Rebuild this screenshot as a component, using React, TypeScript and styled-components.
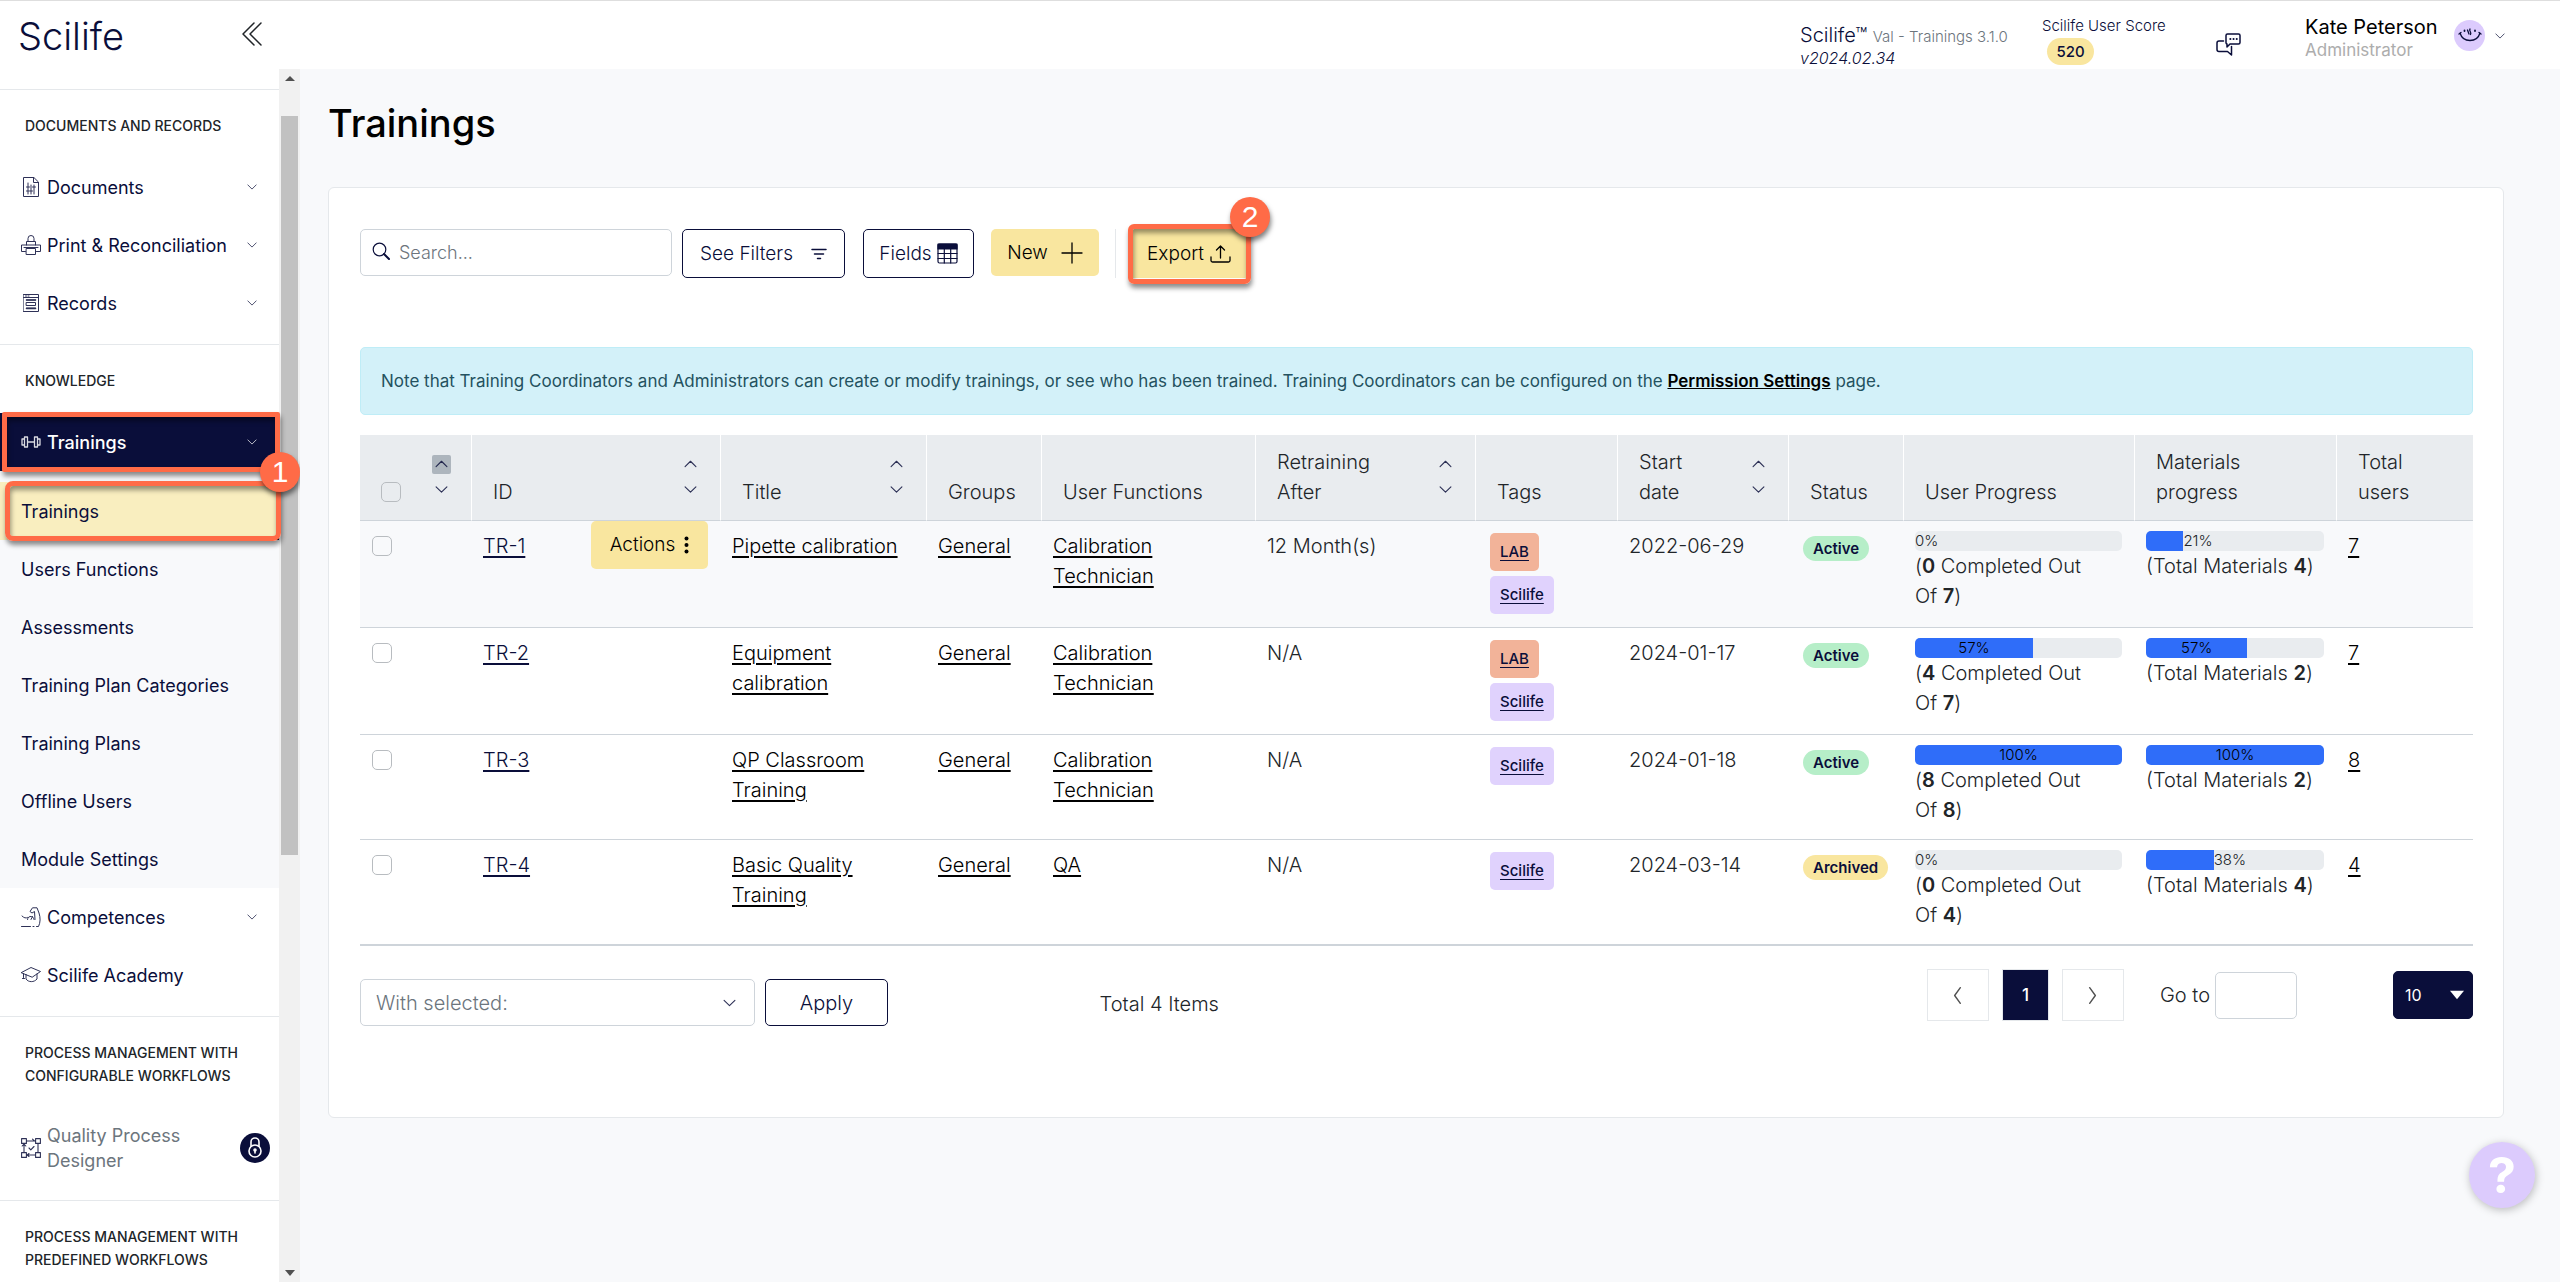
import React from "react";
import styled, { createGlobalStyle, css } from "styled-components";

const color = {
  navy: "#0a0e3a",
  ink: "#212529",
  page: "#f8f9fb",
  line: "#e5e8eb",
  rule: "#ced4da",
  yellow: "#f9e69f",
  orange: "#ff6b47",
  blue: "#2f6df9",
  track: "#e9ecef",
  lilac: "#dccbfd",
};

const Global = createGlobalStyle`
  *, *::before, *::after { box-sizing: border-box; }
  body {
    margin: 0;
    background: ${color.page};
    color: ${color.ink};
    font-family: Inter, "Liberation Sans", sans-serif;
    font-size: 20px;
    font-weight: 300;
    line-height: 30px;
  }
  button, input, select { font: inherit; color: inherit; margin: 0; }
  button { cursor: pointer; }
  svg { display: block; flex: none; }
`;

/* ---------- icons ---------- */

type IconProps = { size?: number };

const Stroke = styled.svg.attrs({ fill: "none", stroke: "currentColor", "aria-hidden": true })`
  stroke-linecap: round;
  stroke-linejoin: round;
`;

function Chevron({ dir, size = 10 }: { dir: "up" | "down" | "left" | "right"; size?: number }) {
  const d = {
    up: "M1 8 6 3 11 8",
    down: "M1 3.5 6 8.5 11 3.5",
    left: "M8 0.5 4 6 8 11.5",
    right: "M4 0.5 8 6 4 11.5",
  }[dir];
  return (
    <Stroke width={size} height={size} viewBox="0 0 12 12" strokeWidth={1} opacity={0.85}>
      <path d={d} />
    </Stroke>
  );
}

const CollapseIcon = () => (
  <Stroke width={20} height={24} viewBox="0 0 20 24" strokeWidth={1.5}>
    <path d="M12 1 1 12l11 11M19 1 8 12l11 11" />
  </Stroke>
);

const DocumentIcon = () => (
  <Stroke width={20} height={20} viewBox="0 0 20 20" strokeWidth={1}>
    <path d="M12.5.5h-10v19h15v-14zM12.5.5v5h5M7 6v11M10 8v9M13 8v9M5.500 10h3M8.500 14h3M11.500 10h3M5.500 14h2" />
  </Stroke>
);

const PrinterIcon = () => (
  <Stroke width={20} height={20} viewBox="0 0 20 20" strokeWidth={1}>
    <path d="M7 6V3.500a3 3 0 0 1 6 0V6M5.500 10V6.500h9V10M4.500 16.500h-4v-6.500h19v6.500h-4M3 12.500h14M5.500 13.500h9v6h-9z" />
  </Stroke>
);

const RecordsIcon = () => (
  <Stroke width={20} height={20} viewBox="0 0 20 20" strokeWidth={1}>
    <path d="M2.500 1.500h15v17h-15zM2.500 4.500h15M4.500 3h1M7 3h1M5.500 7h9M5.500 9.500h9v3h-9zM5.500 15h9" />
    <path d="M5.500 7h9M5.500 15.500h9" strokeWidth={1.6} />
  </Stroke>
);

const DumbbellIcon = () => (
  <Stroke width={20} height={20} viewBox="0 0 20 20" strokeWidth={1.3}>
    <path d="M3.500 5h3v10h-3zM13.500 5h3v10h-3zM3.500 7H1v6h2.500M16.500 7H19v6h-2.500M6.500 10h7" />
  </Stroke>
);

const MuscleIcon = () => (
  <Stroke width={20} height={20} viewBox="0 0 20 20" strokeWidth={1}>
    <path d="M.5 19.500h9M12 19.500h1M15.500 19.500h2c2-4 2-9 .5-13.500L16 .8h-4.500L9 4.500l2 1.500 2.500-1.500.5 8M1 9c2 2 4 2.500 5.500 1.500M6.500 12.500c0-2 2-3.500 4-3 1.500.5 2 1.500 2.500 3M10 12.500l1.500-3" />
  </Stroke>
);

const AcademyIcon = () => (
  <Stroke width={20} height={20} viewBox="0 0 20 20" strokeWidth={1}>
    <path d="m.5 7.500 9.500-5 9.500 4-8 5.500zM5 9.500v4.500c2.500 3.500 8 3.500 11 0V9M2.500 8.500v4M1.500 13.500h2" />
  </Stroke>
);

const ProcessIcon = () => (
  <Stroke width={20} height={20} viewBox="0 0 20 20" strokeWidth={1.1}>
    <path d="M.6.6h4.800v4.800H.6zM14.600.6h4.800v4.800h-4.800zM.6 14.600h4.800v4.800H.6zM14.600 14.600h4.800v4.800h-4.800zM5.400 3h9.200M11.500 1.200 13.500 3M3 5.400v9.200M1.200 8 3 6l1.800 2M5.400 17h9.200M17 5.400v9.200M8 10l1.800 1.800L13 8.500M8 15.500 6.200 17 8 18.500" />
  </Stroke>
);

const LockIcon = () => (
  <Stroke width={16} height={22} viewBox="0 0 16 22" strokeWidth={1.6}>
    <path d="M4 9V5a4 4 0 0 1 8 0v4" />
    <circle cx="8" cy="14" r="6" />
    <path d="M8 13v3" />
    <circle cx="8" cy="13" r="1" />
  </Stroke>
);

const ChatIcon = () => (
  <Stroke width={25} height={23} viewBox="0 0 25 23" strokeWidth={1.5}>
    <path d="M11.500 1h11a1.500 1.500 0 0 1 1.500 1.500v7a1.500 1.500 0 0 1-1.500 1.500h-8.500l-3 3V11a1.500 1.500 0 0 1-1-1.500v-7A1.500 1.500 0 0 1 11.500 1z" />
    <path d="M7.500 8H3a2 2 0 0 0-2 2v6.500a2 2 0 0 0 2 2h8.500l4 3.500v-8.500" />
    <path d="M14.300 6h.1M17.500 6h.1M20.700 6h.1" strokeWidth={2} />
  </Stroke>
);

const AvatarIcon = () => (
  <Stroke width={24} height={16} viewBox="0 0 24 16" strokeWidth={1.3}>
    <path d="M2 5c3 10 17 10 20 0M1 6l2-1.500M21 4.500 23 6M12 1c-1.500 2 2 3 .5 5.500M9.500 2l1.500 4" />
    <path d="M6.500 2.500v.5M17 2.500v.5" strokeWidth={1.8} />
  </Stroke>
);

const SearchIcon = () => (
  <Stroke width={18} height={18} viewBox="0 0 18 18" strokeWidth={1.2}>
    <circle cx="7.500" cy="7.500" r="6.300" />
    <path d="m12 12 5 5" strokeWidth={2} />
  </Stroke>
);

const FilterIcon = () => (
  <Stroke width={16} height={12} viewBox="0 0 16 12" strokeWidth={1.5}>
    <path d="M1 1.500h14M3.500 6h9M6.500 10.500h3" />
  </Stroke>
);

const TableIcon = () => (
  <Stroke width={21} height={21} viewBox="0 0 21 21" strokeWidth={1.2}>
    <path d="M1 1h19v5H1z" fill="currentColor" />
    <rect x="1" y="1" width="19" height="19" rx="1.500" />
    <path d="M1 10.500h19M1 15.500h19M7.300 6v14M13.700 6v14" />
  </Stroke>
);

const PlusIcon = () => (
  <Stroke width={22} height={22} viewBox="0 0 22 22" strokeWidth={1.3}>
    <path d="M11 1v20M1 11h20" />
  </Stroke>
);

const ExportIcon = () => (
  <Stroke width={21} height={18} viewBox="0 0 21 18" strokeWidth={1.3}>
    <path d="M10.500 13V1M6.500 5l4-4 4 4M1 12v3.500A1.500 1.500 0 0 0 2.500 17h16a1.500 1.500 0 0 0 1.500-1.500V12" />
  </Stroke>
);

const DotsIcon = () => (
  <svg width={5} height={18} viewBox="0 0 5 18" fill="currentColor" aria-hidden>
    <circle cx="2.500" cy="2.500" r="2" />
    <circle cx="2.500" cy="9" r="2" />
    <circle cx="2.500" cy="15.500" r="2" />
  </svg>
);

const TriangleIcon = ({ size = 10, up = false }: IconProps & { up?: boolean }) => (
  <svg width={size} height={size} viewBox="0 0 10 10" fill="currentColor" aria-hidden>
    <path d={up ? "M0 8 5 3l5 5z" : "M0 2h10L5 8z"} />
  </svg>
);

/* ---------- frame ---------- */

const Page = styled.div`
  display: flex;
  flex-direction: column;
  height: 100vh;
  min-width: 1600px;
`;

const TopBar = styled.header`
  display: flex;
  justify-content: space-between;
  flex: none;
  height: 69px;
  padding: 0 55px 0 18px;
  border-top: 1px solid #dedede;
  background: #fff;
`;

const Brand = styled.div`
  display: flex;
  align-items: flex-start;
  justify-content: space-between;
  width: 244px;
`;

const Logo = styled.a`
  margin-top: 15px;
  color: ${color.navy};
  font-size: 38px;
  font-weight: 300;
  line-height: 40px;
  text-decoration: none;
`;

const PlainButton = styled.button`
  padding: 0;
  border: 0;
  background: none;
`;

const Collapse = styled(PlainButton)`
  margin-top: 21px;
`;

const TopRight = styled.div`
  display: flex;
  align-items: flex-start;
  color: ${color.navy};
`;

const Version = styled.div`
  width: 242px;
  padding-top: 22px;
  line-height: 24px;
  font-size: 20px;

  small { font-size: 15px; color: #6c757d; }
  em { display: block; font-size: 16px; line-height: 18px; }
`;

const Score = styled.div`
  width: 174px;
  padding-top: 14px;
  font-size: 15px;
  line-height: 22px;
`;

const ScoreBadge = styled.div`
  width: 47px;
  margin: 1px 0 0 5px;
  border-radius: 14px;
  background: ${color.yellow};
  font-size: 15px;
  font-weight: 500;
  line-height: 27px;
  text-align: center;
`;

const ChatButton = styled(PlainButton)`
  margin: 32px 64px 0 0;
`;

const UserName = styled.div`
  width: 149px;
  padding-top: 14px;
  color: #000;
  font-size: 20px;
  font-weight: 400;
  line-height: 24px;

  small { display: block; color: #adadad; font-size: 17px; line-height: 22px; }
`;

const AccountMenu = styled(PlainButton)`
  display: flex;
  align-items: center;
  gap: 10px;
  margin-top: 19px;
`;

const Avatar = styled.span`
  display: grid;
  place-items: center;
  width: 31px;
  height: 31px;
  border-radius: 50%;
  background: ${color.lilac};
`;

const Body = styled.div`
  display: flex;
  flex: 1;
  min-height: 0;
`;

/* ---------- sidebar ---------- */

const Sidebar = styled.aside`
  display: flex;
  flex: none;
  width: 300px;
  overflow: hidden;
`;

const Nav = styled.nav`
  flex: 1;
  padding-top: 20px;
  background: #fff;
`;

const ScrollTrack = styled.div`
  display: flex;
  flex-direction: column;
  align-items: center;
  justify-content: space-between;
  width: 21px;
  padding: 4px 0;
  background: #f1f1f1;
  color: #505050;
`;

const ScrollThumb = styled.div`
  flex: 0 1 739px;
  width: 17px;
  margin: 33px 0 auto;
  background: #c1c1c1;
`;

const Section = styled.section`
  padding-bottom: 12px;
  border-top: 1px solid ${color.line};
`;

const SectionTitle = styled.h2`
  margin: 0;
  padding: 24px 25px 21px;
  font-size: 14px;
  font-weight: 500;
  line-height: 23px;
  text-transform: uppercase;
`;

const NavLink = styled.a<{ $active?: boolean; $muted?: boolean }>`
  position: relative;
  display: flex;
  align-items: center;
  gap: 6px;
  height: 58px;
  padding: 0 22px 0 21px;
  color: ${color.navy};
  font-size: 18px;
  font-weight: 400;
  line-height: 25px;
  text-decoration: none;

  > span { flex: 1; }
  > svg:first-child { opacity: 0.85; }

  ${(p) => p.$active && css`
    background: ${color.navy};
    color: #fff;
    font-weight: 500;
  `}
  ${(p) => p.$muted && css`
    height: 80px;
    padding-right: 9px;
    > span { color: #6c757d; }
  `}
`;

const SubNav = styled.div`
  padding: 11px 0 0;
  background: ${color.page};
`;

const SubLink = styled.a<{ $active?: boolean }>`
  position: relative;
  display: flex;
  align-items: center;
  height: 58px;
  padding: 1px 21px 0;
  color: ${color.navy};
  font-size: 18px;
  font-weight: 400;
  text-decoration: none;
  ${(p) => p.$active && css`
    border-right: 3px solid ${color.navy};
    background: #f9eebf;
  `}
`;

const LockBadge = styled.i`
  display: grid;
  place-items: center;
  width: 30px;
  height: 30px;
  border-radius: 50%;
  background: ${color.navy};
  color: #fff;
`;

/* ---------- callouts drawn over controls ---------- */

const CalloutFrame = styled.i<{ $radius: number; $left?: number; $right?: number }>`
  position: absolute;
  inset: -1px ${(p) => p.$right ?? -1}px -1px ${(p) => p.$left ?? 2}px;
  z-index: 1;
  border: 5px solid ${color.orange};
  border-radius: ${(p) => p.$radius}px;
  box-shadow: 1px 4px 5px rgba(0, 0, 0, 0.45), inset 1px 4px 5px rgba(0, 0, 0, 0.4);
  pointer-events: none;
`;

const CalloutNumber = styled.i<{ $top: number; $right: number }>`
  position: absolute;
  top: ${(p) => p.$top}px;
  right: ${(p) => p.$right}px;
  z-index: 2;
  width: 40px;
  height: 40px;
  border-radius: 50%;
  background: ${color.orange};
  box-shadow: 1px 4px 5px rgba(0, 0, 0, 0.5);
  color: #fff;
  font: 400 30px/40px "Liberation Sans", sans-serif;
  text-align: center;
`;

/* ---------- main ---------- */

const Main = styled.main`
  flex: 1;
  min-width: 0;
  padding: 30px 56px 0 28px;
`;

const Title = styled.h1`
  margin: 0 0 40px;
  color: #000;
  font-size: 38px;
  font-weight: 500;
  line-height: 48px;
`;

const Card = styled.div`
  padding: 41px 30px 91px 31px;
  border: 1px solid ${color.line};
  border-radius: 6px;
  background: #fff;
`;

const Toolbar = styled.div`
  display: flex;
  align-items: flex-start;
  height: 49px;
  margin-bottom: 69px;
`;

const SearchBox = styled.label`
  display: flex;
  align-items: center;
  gap: 9px;
  width: 312px;
  height: 47px;
  margin-right: 10px;
  padding: 0 11px;
  border: 1px solid ${color.rule};
  border-radius: 5px;
  color: ${color.navy};
  font-size: 18px;

  svg { margin-bottom: 4px; }
  input {
    flex: 1;
    min-width: 0;
    padding: 0;
    border: 0;
    outline: 0;
    background: none;
  }
  input::placeholder { color: #6c757d; opacity: 1; }
`;

const Button = styled.button<{ $solid?: boolean; $mr?: number }>`
  display: flex;
  align-items: center;
  justify-content: center;
  gap: ${(p) => (p.$solid ? 13 : 5)}px;
  height: ${(p) => (p.$solid ? 47 : 49)}px;
  margin-right: ${(p) => p.$mr ?? 0}px;
  padding: 0;
  border: ${(p) => (p.$solid ? "0" : `1px solid ${color.navy}`)};
  border-radius: 5px;
  background: ${(p) => (p.$solid ? color.yellow : "#fff")};
  color: ${(p) => (p.$solid ? "#000" : color.navy)};
  font-size: 19px;
  white-space: nowrap;
`;

const FilterButton = styled(Button)`
  gap: 18px;
  width: 163px;
`;

const FieldsButton = styled(Button)`
  width: 111px;
`;

const NewButton = styled(Button)`
  width: 108px;
`;

const ExportSlot = styled.div`
  position: relative;
  padding-left: 12px;
  border-left: 1px solid ${color.line};
`;

const ExportButton = styled(Button)`
  gap: 6px;
  width: 122px;
  height: 49px;
`;

const ExportFrame = styled(CalloutFrame)`
  inset: -5px -1px -6px 12px;
`;

const Note = styled.p`
  margin: 0 0 20px;
  padding: 18px 20px;
  border: 1px solid #bfedf7;
  border-radius: 5px;
  background: #d3f1f9;
  color: #24525f;
  font-size: 17px;
  font-weight: 400;

  a { color: #000; font-weight: 600; }
`;

const Table = styled.table`
  width: 100%;
  border-collapse: separate;
  border-spacing: 0;
  border-bottom: 1px solid ${color.rule};
  table-layout: fixed;
`;

const HeadCell = styled.th`
  padding: 12px 20px 13px 21px;
  border-bottom: 1px solid ${color.rule};
  background: ${color.track};
  font-weight: 300;
  text-align: left;

  & + & { border-left: 1px solid #fff; }
`;

const HeadInner = styled.div`
  display: flex;
  align-items: flex-end;
  justify-content: space-between;
  height: 60px;
`;

const HeadLabel = styled.span<{ $narrow?: boolean }>`
  width: ${(p) => (p.$narrow ? "min-content" : "auto")};
`;

const SelectAll = styled.span`
  display: flex;
  align-items: flex-end;
  align-self: flex-start;
  height: 55px;
`;

const Sorter = styled.span`
  display: flex;
  flex-direction: column;
  gap: 6px;
  align-self: center;
`;

const SortButton = styled.button<{ $on?: boolean }>`
  display: grid;
  place-items: center;
  width: 19px;
  height: 19px;
  padding: 0;
  border: 0;
  border-radius: 2px;
  background: ${(p) => (p.$on ? "#adb5bd" : "none")};
  color: ${color.navy};
`;

const Check = styled.input.attrs({ type: "checkbox" })`
  appearance: none;
  display: block;
  flex: none;
  width: 20px;
  height: 20px;
  border: 1px solid #b8bcc0;
  border-radius: 5px;
`;

const Row = styled.tr<{ $hover?: boolean }>`
  background: ${(p) => (p.$hover ? color.page : "#fff")};
`;

const Cell = styled.td`
  padding: 10px 12px 14px;
  border-bottom: 1px solid ${color.rule};
  vertical-align: top;
  font-weight: 300;

  b { font-weight: 600; }
`;

const CheckCell = styled(Cell)`
  padding-top: 15px;
`;

const CellLink = styled.a<{ $navy?: boolean }>`
  color: ${(p) => (p.$navy ? color.navy : "#000")};
  text-decoration-thickness: 2px;
  text-underline-offset: 3px;
`;

const IdCell = styled.div`
  display: flex;
  align-items: flex-start;
  justify-content: space-between;
`;

const ActionsButton = styled(Button)`
  gap: 9px;
  width: 117px;
  height: 48px;
  margin: -10px 0 -28px;
`;

const Tags = styled.div`
  display: flex;
  flex-direction: column;
  align-items: flex-start;
  gap: 5px;
  margin-bottom: -1px;
  padding: 2px 0 0 3px;
`;

const Tag = styled.a<{ $tone: string }>`
  padding: 0 10px;
  border-radius: 5px;
  background: ${(p) => p.$tone};
  color: ${color.navy};
  font-size: 15px;
  font-weight: 500;
  line-height: 38px;
  text-underline-offset: 3px;
`;

const Status = styled.span<{ $archived?: boolean }>`
  display: inline-block;
  margin: 5px 0 0 3px;
  padding: 0 10px;
  border-radius: 13px;
  background: ${(p) => (p.$archived ? color.yellow : "#b6eec8")};
  color: ${color.navy};
  font-size: 15px;
  font-weight: 600;
  line-height: 25px;
`;

const Track = styled.div`
  display: flex;
  height: 20px;
  overflow: hidden;
  border-radius: 5px;
  background: ${color.track};
  font-size: 15px;
  line-height: 20px;
`;

const Fill = styled.div`
  background: ${color.blue};
  color: #000;
  text-align: center;
`;

/* ---------- table footer ---------- */

const Footer = styled.div`
  display: grid;
  grid-template-columns: 35% 1fr auto;
  align-items: start;
  padding-top: 23px;
`;

const BulkForm = styled.form`
  display: flex;
  gap: 10px;
  padding-top: 10px;
`;

const SelectWrap = styled.span<{ $dark?: boolean }>`
  position: relative;
  display: block;
  width: ${(p) => (p.$dark ? 80 : 395)}px;
  height: ${(p) => (p.$dark ? 48 : 47)}px;
  color: ${(p) => (p.$dark ? "#fff" : color.navy)};

  select {
    width: 100%;
    height: 100%;
    padding: 0 ${(p) => (p.$dark ? 11 : 15)}px;
    border: 1px solid ${(p) => (p.$dark ? color.navy : color.rule)};
    border-radius: 5px;
    appearance: none;
    background: ${(p) => (p.$dark ? color.navy : "#fff")};
    color: ${(p) => (p.$dark ? "#fff" : "#6c757d")};
    font-size: ${(p) => (p.$dark ? 16 : 20)}px;
    font-weight: ${(p) => (p.$dark ? 400 : 300)};
  }
  svg {
    position: absolute;
    top: 50%;
    right: ${(p) => (p.$dark ? 9 : 19)}px;
    transform: translateY(-50%);
    pointer-events: none;
  }
`;

const ApplyButton = styled(Button)`
  width: 123px;
  height: 47px;
  font-size: 20px;
`;

const Total = styled.div`
  padding-top: 20px;
`;

const Paging = styled.div`
  display: flex;
  align-items: center;
`;

const PageButton = styled.button<{ $current?: boolean }>`
  display: grid;
  place-items: center;
  width: ${(p) => (p.$current ? 47 : 62)}px;
  height: 52px;
  margin-right: 13px;
  padding: 0;
  border: 1px solid ${color.line};
  background: ${(p) => (p.$current ? color.navy : "#fff")};
  color: ${(p) => (p.$current ? "#fff" : "#333")};
  font-size: 17px;
  font-weight: 500;
`;

const GoTo = styled.label`
  display: flex;
  align-items: center;
  gap: 5px;
  margin: 0 96px 0 23px;

  input {
    width: 82px;
    height: 47px;
    border: 1px solid ${color.rule};
    border-radius: 5px;
  }
`;

const Help = styled.button`
  position: fixed;
  right: 25px;
  bottom: 74px;
  width: 66px;
  height: 66px;
  padding: 0;
  border: 0;
  border-radius: 50%;
  background: ${color.lilac};
  box-shadow: 1px 2px 8px rgba(0, 0, 0, 0.25);
  color: #fff;
  font-size: 50px;
  font-weight: 700;
  line-height: 66px;
`;

/* ---------- data ---------- */

const columns: { label: string; width: number; sort?: boolean }[] = [
  { label: "ID", width: 249, sort: true },
  { label: "Title", width: 206, sort: true },
  { label: "Groups", width: 115 },
  { label: "User Functions", width: 214 },
  { label: "Retraining After", width: 220, sort: true },
  { label: "Tags", width: 142 },
  { label: "Start date", width: 171, sort: true },
  { label: "Status", width: 115 },
  { label: "User Progress", width: 231 },
  { label: "Materials progress", width: 202 },
  { label: "Total users", width: 137 },
];

const trainings = [
  { id: "TR-1", title: "Pipette calibration", fn: "Calibration Technician", after: "12 Month(s)", tags: ["LAB", "Scilife"], start: "2022-06-29", status: "Active", pct: 0, done: 0, users: 7, mat: 21, mats: 4 },
  { id: "TR-2", title: "Equipment calibration", fn: "Calibration Technician", after: "N/A", tags: ["LAB", "Scilife"], start: "2024-01-17", status: "Active", pct: 57, done: 4, users: 7, mat: 57, mats: 2 },
  { id: "TR-3", title: "QP Classroom Training", fn: "Calibration Technician", after: "N/A", tags: ["Scilife"], start: "2024-01-18", status: "Active", pct: 100, done: 8, users: 8, mat: 100, mats: 2 },
  { id: "TR-4", title: "Basic Quality Training", fn: "QA", after: "N/A", tags: ["Scilife"], start: "2024-03-14", status: "Archived", pct: 0, done: 0, users: 4, mat: 38, mats: 4 },
];

const subLinks = ["Users Functions", "Assessments", "Training Plan Categories", "Training Plans", "Offline Users", "Module Settings"];

function NavItem({ icon, label, open }: { icon: React.ReactNode; label: string; open?: boolean }) {
  return (
    <NavLink href="#">
      {icon}
      <span>{label}</span>
      {open && <Chevron dir="down" />}
    </NavLink>
  );
}

function SortControl({ label, up }: { label: string; up?: boolean }) {
  return (
    <Sorter>
      <SortButton type="button" aria-label={`Sort ${label} ascending`} $on={up}><Chevron dir="up" size={13} /></SortButton>
      <SortButton type="button" aria-label={`Sort ${label} descending`}><Chevron dir="down" size={13} /></SortButton>
    </Sorter>
  );
}

function Progress({ value }: { value: number }) {
  const inside = value > 50;
  return (
    <Track>
      <Fill style={{ width: `${value}%` }}>{inside && `${value}%`}</Fill>
      {!inside && `${value}%`}
    </Track>
  );
}

export default function App() {
  return (
    <Page>
      <Global />
      <TopBar>
        <Brand>
          <Logo href="#">Scilife</Logo>
          <Collapse type="button" aria-label="Collapse menu"><CollapseIcon /></Collapse>
        </Brand>
        <TopRight>
          <Version>Scilife™ <small>Val - Trainings 3.1.0</small><em>v2024.02.34</em></Version>
          <Score>Scilife User Score<ScoreBadge>520</ScoreBadge></Score>
          <ChatButton type="button" aria-label="Messages"><ChatIcon /></ChatButton>
          <UserName>Kate Peterson<small>Administrator</small></UserName>
          <AccountMenu type="button" aria-label="Account">
            <Avatar><AvatarIcon /></Avatar>
            <Chevron dir="down" />
          </AccountMenu>
        </TopRight>
      </TopBar>

      <Body>
        <Sidebar>
          <Nav>
            <Section>
              <SectionTitle>Documents and records</SectionTitle>
              <NavItem icon={<DocumentIcon />} label="Documents" open />
              <NavItem icon={<PrinterIcon />} label="Print & Reconciliation" open />
              <NavItem icon={<RecordsIcon />} label="Records" open />
            </Section>
            <Section>
              <SectionTitle>Knowledge</SectionTitle>
              <NavLink href="#" $active>
                <DumbbellIcon />
                <span>Trainings</span>
                <Chevron dir="down" />
                <CalloutFrame $radius={2} />
                <CalloutNumber $top={39} $right={-21}>1</CalloutNumber>
              </NavLink>
              <SubNav>
                <SubLink href="#" $active>
                  Trainings
                  <CalloutFrame $radius={8} $left={5} $right={-5} />
                </SubLink>
                {subLinks.map((l) => <SubLink href="#" key={l}>{l}</SubLink>)}
              </SubNav>
              <NavItem icon={<MuscleIcon />} label="Competences" open />
              <NavItem icon={<AcademyIcon />} label="Scilife Academy" />
            </Section>
            <Section>
              <SectionTitle>Process management with configurable workflows</SectionTitle>
              <NavLink href="#" $muted>
                <ProcessIcon />
                <span>Quality Process<br />Designer</span>
                <LockBadge><LockIcon /></LockBadge>
              </NavLink>
            </Section>
            <Section>
              <SectionTitle>Process management with predefined workflows</SectionTitle>
            </Section>
          </Nav>
          <ScrollTrack>
            <TriangleIcon up />
            <ScrollThumb />
            <TriangleIcon />
          </ScrollTrack>
        </Sidebar>

        <Main>
          <Title>Trainings</Title>
          <Card>
            <Toolbar>
              <SearchBox>
                <SearchIcon />
                <input type="text" placeholder="Search..." aria-label="Search" />
              </SearchBox>
              <FilterButton type="button" $mr={18}>See Filters<FilterIcon /></FilterButton>
              <FieldsButton type="button" $mr={17}>Fields<TableIcon /></FieldsButton>
              <NewButton type="button" $solid $mr={16}>New<PlusIcon /></NewButton>
              <ExportSlot>
                <ExportButton type="button" $solid>Export<ExportIcon /></ExportButton>
                <ExportFrame $radius={6} />
                <CalloutNumber $top={-32} $right={-20}>2</CalloutNumber>
              </ExportSlot>
            </Toolbar>

            <Note>
              Note that Training Coordinators and Administrators can create or modify trainings, or see who has been trained. Training Coordinators can be configured on the <a href="#">Permission Settings</a> page.
            </Note>

            <Table>
              <colgroup>
                <col width={111} />
                {columns.map((c) => <col key={c.label} width={c.width} />)}
              </colgroup>
              <thead>
                <tr>
                  <HeadCell>
                    <HeadInner>
                      <SelectAll><Check aria-label="Select all" /></SelectAll>
                      <SortControl label="selection" up />
                    </HeadInner>
                  </HeadCell>
                  {columns.map((c) => (
                    <HeadCell key={c.label}>
                      <HeadInner>
                        <HeadLabel $narrow={c.sort}>{c.label}</HeadLabel>
                        {c.sort && <SortControl label={c.label} />}
                      </HeadInner>
                    </HeadCell>
                  ))}
                </tr>
              </thead>
              <tbody>
                {trainings.map((t, i) => (
                  <Row key={t.id} $hover={i === 0}>
                    <CheckCell><Check aria-label={`Select ${t.id}`} /></CheckCell>
                    <Cell>
                      <IdCell>
                        <CellLink href="#" $navy>{t.id}</CellLink>
                        {i === 0 && <ActionsButton type="button" $solid>Actions<DotsIcon /></ActionsButton>}
                      </IdCell>
                    </Cell>
                    <Cell><CellLink href="#">{t.title}</CellLink></Cell>
                    <Cell><CellLink href="#">General</CellLink></Cell>
                    <Cell><CellLink href="#">{t.fn}</CellLink></Cell>
                    <Cell>{t.after}</Cell>
                    <Cell>
                      <Tags>
                        {t.tags.map((tag) => (
                          <Tag href="#" key={tag} $tone={tag === "LAB" ? "#f2b399" : "#e0d2fd"}>{tag}</Tag>
                        ))}
                      </Tags>
                    </Cell>
                    <Cell>{t.start}</Cell>
                    <Cell><Status $archived={t.status === "Archived"}>{t.status}</Status></Cell>
                    <Cell>
                      <Progress value={t.pct} />
                      (<b>{t.done}</b> Completed Out Of&nbsp;<b>{t.users}</b>)
                    </Cell>
                    <Cell>
                      <Progress value={t.mat} />
                      (Total Materials <b>{t.mats}</b>)
                    </Cell>
                    <Cell><CellLink href="#">{t.users}</CellLink></Cell>
                  </Row>
                ))}
              </tbody>
            </Table>

            <Footer>
              <BulkForm>
                <SelectWrap>
                  <select aria-label="With selected"><option>With selected:</option></select>
                  <Chevron dir="down" size={13} />
                </SelectWrap>
                <ApplyButton type="button">Apply</ApplyButton>
              </BulkForm>
              <Total>Total 4 Items</Total>
              <Paging>
                <PageButton type="button" aria-label="Previous page"><Chevron dir="left" size={17} /></PageButton>
                <PageButton type="button" $current>1</PageButton>
                <PageButton type="button" aria-label="Next page"><Chevron dir="right" size={17} /></PageButton>
                <GoTo>Go to<input type="text" /></GoTo>
                <SelectWrap $dark>
                  <select aria-label="Items per page"><option>10</option></select>
                  <TriangleIcon size={14} />
                </SelectWrap>
              </Paging>
            </Footer>
          </Card>
        </Main>
      </Body>
      <Help type="button" aria-label="Help">?</Help>
    </Page>
  );
}
